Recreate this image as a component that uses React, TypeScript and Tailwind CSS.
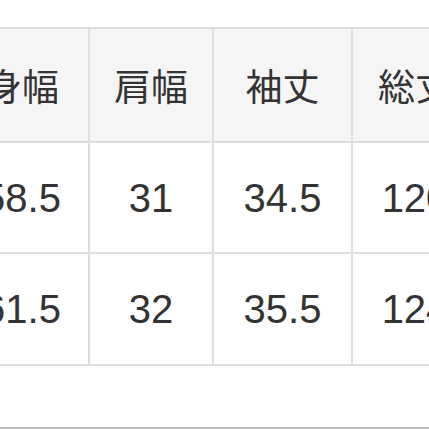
import React from "react";

const headers = ["身幅", "肩幅", "袖丈", "総丈"];
const rows = [
  ["58.5", "31", "34.5", "120"],
  ["61.5", "32", "35.5", "124"],
];

export default function App() {
  return (
    <div
      className="w-[429px] h-[429px] overflow-hidden bg-white flex flex-col text-[#333333]"
      style={{ fontFamily: '"Liberation Sans", "Noto Sans CJK JP", sans-serif' }}
    >
      <div className="mt-[27px] ml-[-46px] w-max bg-[#dedede] p-[2px] grid grid-cols-[132px_122px_137px_124px] grid-rows-[112px_109px_110px] gap-[2px]">
        {headers.map((h) => (
          <div
            key={h}
            className="bg-[#f5f5f5] flex items-center justify-center text-[37px] leading-none"
            style={{ fontFamily: '"Noto Sans CJK JP", sans-serif' }}
          >
            {h}
          </div>
        ))}
        {rows.flat().map((v, i) => (
          <div
            key={i}
            className="bg-white flex items-center justify-center text-[40px] leading-none"
          >
            {v}
          </div>
        ))}
      </div>
      <div className="flex-1" />
      <div className="h-[2px] bg-[#bdbdbd]" />
    </div>
  );
}
